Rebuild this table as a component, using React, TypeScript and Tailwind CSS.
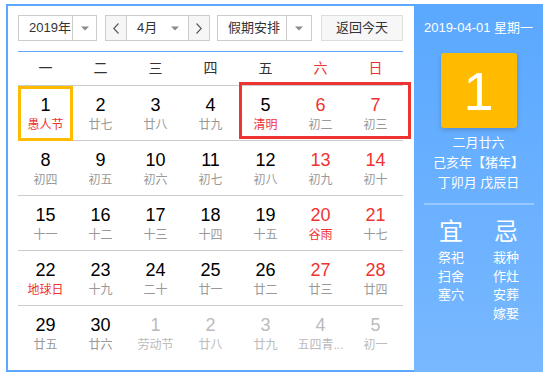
import React from "react";

type Cell = { n: string; l: string; nc: "k" | "r" | "g"; lc: "g" | "r" | "x" };

const weeks: Cell[][] = [
  [
    { n: "1", l: "愚人节", nc: "k", lc: "r" },
    { n: "2", l: "廿七", nc: "k", lc: "g" },
    { n: "3", l: "廿八", nc: "k", lc: "g" },
    { n: "4", l: "廿九", nc: "k", lc: "g" },
    { n: "5", l: "清明", nc: "k", lc: "r" },
    { n: "6", l: "初二", nc: "r", lc: "g" },
    { n: "7", l: "初三", nc: "r", lc: "g" },
  ],
  [
    { n: "8", l: "初四", nc: "k", lc: "g" },
    { n: "9", l: "初五", nc: "k", lc: "g" },
    { n: "10", l: "初六", nc: "k", lc: "g" },
    { n: "11", l: "初七", nc: "k", lc: "g" },
    { n: "12", l: "初八", nc: "k", lc: "g" },
    { n: "13", l: "初九", nc: "r", lc: "g" },
    { n: "14", l: "初十", nc: "r", lc: "g" },
  ],
  [
    { n: "15", l: "十一", nc: "k", lc: "g" },
    { n: "16", l: "十二", nc: "k", lc: "g" },
    { n: "17", l: "十三", nc: "k", lc: "g" },
    { n: "18", l: "十四", nc: "k", lc: "g" },
    { n: "19", l: "十五", nc: "k", lc: "g" },
    { n: "20", l: "谷雨", nc: "r", lc: "r" },
    { n: "21", l: "十七", nc: "r", lc: "g" },
  ],
  [
    { n: "22", l: "地球日", nc: "k", lc: "r" },
    { n: "23", l: "十九", nc: "k", lc: "g" },
    { n: "24", l: "二十", nc: "k", lc: "g" },
    { n: "25", l: "廿一", nc: "k", lc: "g" },
    { n: "26", l: "廿二", nc: "k", lc: "g" },
    { n: "27", l: "廿三", nc: "r", lc: "g" },
    { n: "28", l: "廿四", nc: "r", lc: "g" },
  ],
  [
    { n: "29", l: "廿五", nc: "k", lc: "g" },
    { n: "30", l: "廿六", nc: "k", lc: "g" },
    { n: "1", l: "劳动节", nc: "g", lc: "x" },
    { n: "2", l: "廿八", nc: "g", lc: "x" },
    { n: "3", l: "廿九", nc: "g", lc: "x" },
    { n: "4", l: "五四青...", nc: "g", lc: "x" },
    { n: "5", l: "初一", nc: "g", lc: "x" },
  ],
];

const numCls = { k: "text-[#000]", r: "text-[#ee3333]", g: "text-[#bbbbbb]" };
const lunCls = { g: "text-[#999999]", r: "text-[#ee3333]", x: "text-[#bbbbbb]" };

function Tri() {
  return (
    <svg width="8" height="5" viewBox="0 0 8 5">
      <path d="M0 0.5 L8 0.5 L4 4.5 Z" fill="#8a8a8a" />
    </svg>
  );
}

function Chev({ dir }: { dir: "l" | "r" }) {
  return (
    <svg width="6" height="11" viewBox="0 0 6 11">
      <polyline
        points={dir === "l" ? "5.5,0.5 0.8,5.5 5.5,10.5" : "0.5,0.5 5.2,5.5 0.5,10.5"}
        fill="none"
        stroke="#555"
        strokeWidth="1.1"
      />
    </svg>
  );
}

export default function App() {
  return (
    <div
      className="h-[379px] w-[547px] bg-white pl-[6px] pt-[4px]"
      style={{ fontFamily: '"Liberation Sans", "Noto Sans CJK SC", sans-serif' }}
    >
      <div className="flex h-[368px] w-[537px]">
        {/* Left panel */}
        <div className="w-[408px] border-2 border-r-0 border-[#5aa8ff] bg-white pl-[10px] pt-[9px]">
          {/* controls */}
          <div className="flex h-[26px] text-[13px] text-[#333]">
            <div className="flex w-[79px] border border-[#cccccc] bg-white">
              <span className="flex flex-1 items-center pl-[10px]">2019年</span>
              <span className="flex w-[24px] items-center justify-center border-l border-[#cccccc]">
                <Tri />
              </span>
            </div>
            <div className="ml-[8px] flex w-[105px] border border-[#cccccc] bg-white">
              <span className="flex w-[21px] items-center justify-center border-r border-[#cccccc] bg-[#f6f6f6]">
                <Chev dir="l" />
              </span>
              <span className="flex flex-1 items-center pl-[10px]">
                4月
                <span className="ml-auto mr-[9px] flex">
                  <Tri />
                </span>
              </span>
              <span className="flex w-[21px] items-center justify-center border-l border-[#cccccc] bg-[#f6f6f6]">
                <Chev dir="r" />
              </span>
            </div>
            <div className="ml-[7px] flex w-[95px] border border-[#cccccc] bg-white">
              <span className="flex flex-1 items-center pl-[10px]">假期安排</span>
              <span className="flex w-[25px] items-center justify-center border-l border-[#cccccc]">
                <Tri />
              </span>
            </div>
            <div className="ml-[9px] flex w-[82px] items-center justify-center border border-[#dddddd] bg-[#f7f7f7]">
              返回今天
            </div>
          </div>
          <div className="mt-[10px] h-px w-[385px] bg-[#5aa8ff]" />

          {/* grid */}
          <div className="relative w-[385px]">
            <div className="grid h-[33px] grid-cols-7 items-center text-center text-[14px] text-[#333]">
              <span>一</span>
              <span>二</span>
              <span>三</span>
              <span>四</span>
              <span>五</span>
              <span className="text-[#ee3333]">六</span>
              <span className="text-[#ee3333]">日</span>
            </div>
            {weeks.map((w, wi) => (
              <div key={wi} className="grid h-[55px] grid-cols-7 border-t border-[#cccccc]">
                {w.map((c, ci) => (
                  <div key={ci} className="relative flex flex-col items-center pt-[9px]">
                    <span className={`text-[18px] leading-[20px] ${numCls[c.nc]}`}>{c.n}</span>
                    <span
                      className={`mt-[2px] whitespace-nowrap text-center text-[12px] leading-[16px] ${lunCls[c.lc]}`}
                    >
                      {c.l}
                    </span>
                    {wi === 0 && ci === 0 && (
                      <div className="absolute inset-x-0 top-0 -bottom-px border-[3px] border-[#ffbb00]" />
                    )}
                  </div>
                ))}
              </div>
            ))}
            <div className="absolute left-[221px] top-[30px] h-[57px] w-[172px] border-[3px] border-[#ee3333]" />
          </div>
        </div>

        {/* Right panel */}
        <div className="flex w-[129px] flex-col items-center bg-gradient-to-b from-[#5aa8ff] to-[#78b8ff] pt-[14px] text-white">
          <div className="text-[13px] leading-[20px]">2019-04-01 星期一</div>
          <div className="mt-[15px] flex h-[75px] w-[76px] items-center justify-center rounded-[3px] bg-[#ffbb00] text-[54px] font-light leading-none shadow-[0_2px_5px_rgba(0,0,0,0.18)]">
            1
          </div>
          <div className="mt-[5px] text-center text-[13px] leading-[20px]">
            <div>二月廿六</div>
            <div>己亥年【猪年】</div>
            <div>丁卯月 戊辰日</div>
          </div>
          <div className="mt-[10px] h-[2px] w-[110px] bg-[rgba(255,255,255,0.3)]" />
          <div className="mt-[12px] flex gap-[15px]">
            <div className="flex w-[40px] flex-col items-center">
              <div className="text-[24px] leading-[30px]">宜</div>
              <div className="mt-[2px] text-center text-[13px] leading-[18.5px]">
                <div>祭祀</div>
                <div>扫舍</div>
                <div>塞穴</div>
              </div>
            </div>
            <div className="flex w-[40px] flex-col items-center">
              <div className="text-[24px] leading-[30px]">忌</div>
              <div className="mt-[2px] text-center text-[13px] leading-[18.5px]">
                <div>栽种</div>
                <div>作灶</div>
                <div>安葬</div>
                <div>嫁娶</div>
              </div>
            </div>
          </div>
        </div>
      </div>
    </div>
  );
}
